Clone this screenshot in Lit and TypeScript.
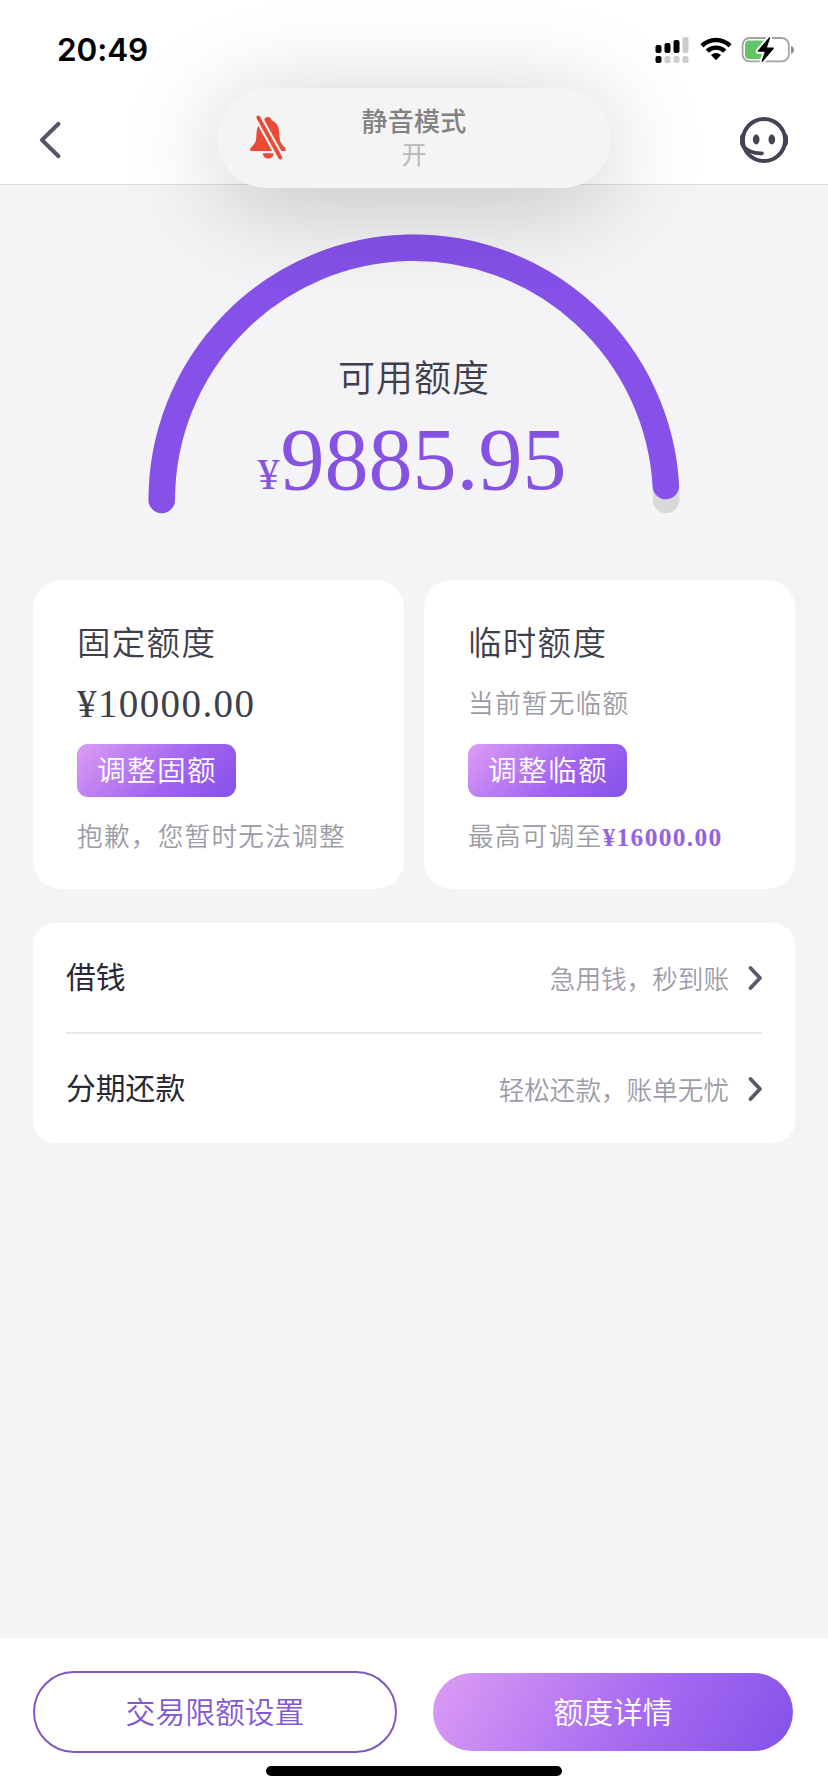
import { LitElement, html, css, svg } from "lit";
import { customElement, property } from "lit/decorators.js";

@customElement("status-bar")
class StatusBar extends LitElement {
  static styles = css`
    :host { display: flex; height: 96px; box-sizing: border-box; padding: 32px 34px 0 57px; justify-content: space-between; }
    .time { font: 600 31.5px/36px Inter, sans-serif; letter-spacing: -0.1px; color: #000; }
    .icons { display: flex; gap: 11px; padding-top: 4px; }
    svg { display: block; }
    .battery { margin-left: -2px; }
  `;
  render() {
    const bars = [8, 10, 13, 16];
    return html`
      <span class="time">20:49</span>
      <div class="icons">
        <svg width="34" height="28" viewBox="0 0 34 28">
          ${bars.map((h, i) => svg`
            <rect x=${0.5 + i * 9} y=${17 - h} width="6" height=${h} rx="2" fill=${i < 3 ? "#000" : "#ccc"}></rect>
            <rect x=${0.5 + i * 9} y="20" width="6" height="7" rx="2" fill=${i < 1 ? "#000" : "#ccc"}></rect>`)}
        </svg>
        <svg width="32" height="28" viewBox="0 0 32 28">
          <path d="M.4 8.2a22.2 22.2 0 0 1 31.2 0l-3.1 3.2a17.8 17.8 0 0 0-25 0z"></path>
          <path d="M5.7 13.6a14.7 14.7 0 0 1 20.6 0l-3.1 3.2a10.3 10.3 0 0 0-14.4 0z"></path>
          <path d="M11 19a7.2 7.2 0 0 1 10 0l-5 5.2z"></path>
        </svg>
        <svg class="battery" width="53" height="28" viewBox="0 0 53 28">
          <rect x="1.6" y="2" width="46.2" height="23.4" rx="7" fill="none" stroke="#a3a3a3" stroke-width="1.8"></rect>
          <path d="M50 10v8c2-.6 3-2.200 3-4s-1-3.400-3-4z" fill="#8f8f8f"></path>
          <rect x="4" y="4.500" width="21" height="18.500" rx="4" fill="#62c466"></rect>
          <path d="M28 1.400 16.800 14.700q-.5 1 .6 1.100h6.300l-3.100 9.300q-.1 1.400 1 .7L32.700 12.800q.6-1-.6-1.200h-6.200l3.200-9.300q.1-1.500-1.100-.9z" fill="#000" stroke="#fff" stroke-width="4" stroke-linejoin="round" paint-order="stroke"></path>
        </svg>
      </div>`;
  }
}

@customElement("nav-bar")
class NavBar extends LitElement {
  static styles = css`
    :host { display: flex; height: 89px; box-sizing: border-box; padding: 18px 38px 0 38px; justify-content: space-between; border-bottom: 1px solid #dcdcde; }
    svg { display: block; }
  `;
  render() {
    return html`
      <svg width="26" height="52" viewBox="0 0 26 52">
        <path d="M20.500 9.800 4 26l16.500 16.200" fill="none" stroke="#55546a" stroke-width="4" stroke-linecap="round" stroke-linejoin="round"></path>
      </svg>
      <svg width="52" height="52" viewBox="0 0 52 52">
        <g fill="none" stroke="#444356">
          <circle cx="26" cy="26" r="21.100" stroke-width="4"></circle>
          <path d="M6 33c4.500 5 11 6.600 18 6.300" stroke-width="3.800" stroke-linecap="round"></path>
        </g>
        <path d="M6.500 18.500C3 19.500 2 21 2 24v4.500C2 32 4 34.500 8 35.500 6 29 6 24 8 18.500zM45.500 18.500c3.500 1 4.500 2.500 4.500 5.500v4.500c0 2.500-1.500 4-4.500 5 1.500-5 1.500-10 0-15z" fill="#444356"></path>
        <ellipse cx="18.200" cy="25.500" rx="3.300" ry="4.900" fill="#444356"></ellipse>
        <ellipse cx="33.800" cy="25.500" rx="3.300" ry="4.900" fill="#444356"></ellipse>
      </svg>`;
  }
}

@customElement("mute-banner")
class MuteBanner extends LitElement {
  static styles = css`
    :host { position: absolute; left: 217px; top: 88px; width: 394px; height: 100px; border-radius: 50px; box-sizing: border-box; background: #f4f4f5; box-shadow: 0 14px 100px rgba(0, 0, 0, 0.22); display: grid; grid-template-columns: 104px 1fr 104px; text-align: center; z-index: 2; }
    .bell { margin: 25px 0 0 31px; display: block; }
    .text { padding-top: 15px; font-family: "Noto Sans CJK SC", sans-serif; }
    .title { font-size: 26px; line-height: 34px; font-weight: 500; color: #828284; letter-spacing: 0.3px; }
    .state { font-size: 25px; line-height: 32px; color: #b9b9bb; }
  `;
  render() {
    return html`
      <svg class="bell" width="40" height="48" viewBox="0 0 40 48">
        <g fill="#e94b39">
          <path d="M2.300 38v-2c0-2 5.600-4 6-11.500C8.600 15 10 9.500 16 7.500c.6-4.600 7.200-4.600 7.800 0 6.200 2 7.500 7.500 7.800 17 .3 7.500 6 9.500 6 11.500v2z"></path>
          <path d="M14.700 40.200h11c-.5 7-10.300 7-11 0z"></path>
        </g>
        <path d="M10.300 4.500 32.300 44.500" stroke="#f4f4f5" stroke-width="8"></path>
        <path d="M10.300 4.500 32.300 44.500" stroke="#e94b39" stroke-width="3.800" stroke-linecap="round"></path>
      </svg>
      <div class="text">
        <div class="title">静音模式</div>
        <div class="state">开</div>
      </div>`;
  }
}

@customElement("quota-gauge")
class QuotaGauge extends LitElement {
  static styles = css`
    :host { display: grid; justify-items: center; height: 395px; }
    .arc { grid-area: 1 / 1; margin-top: 49px; display: block; }
    .text { grid-area: 1 / 1; padding-top: 166px; text-align: center; }
    .label { font: 350 37px/50px "Noto Sans CJK SC", sans-serif; letter-spacing: 1px; color: #3f3e4c; }
    .amount { font: 88px/100px "Liberation Serif", serif; color: #8552e2; margin: 9px 0 0 -4px; white-space: nowrap; }
    .sign { font-size: 44px; margin-right: 1px; }
  `;
  render() {
    return html`
      <svg class="arc" width="532" height="280" viewBox="-266 -266 532 280" fill="none" stroke-width="26.500" stroke-linecap="round">
        <path d="M-252.250 0A252.250 252.250 0 0 1 252.250 0" stroke="#d8d8da"></path>
        <path d="M-252.250 0A252.250 252.250 0 0 1 251.860 -14" stroke="#8551e8"></path>
      </svg>
      <div class="text">
        <div class="label">可用额度</div>
        <div class="amount"><span class="sign">¥</span>9885.95</div>
      </div>`;
  }
}

@customElement("quota-card")
class QuotaCard extends LitElement {
  @property() name = "";
  @property() action = "";
  static styles = css`
    :host { display: flex; flex-direction: column; align-items: flex-start; height: 309px; box-sizing: border-box; padding: 37px 0 0 44px; border-radius: 28px; background: #fff; font-family: "Noto Sans CJK SC", sans-serif; font-weight: 350; letter-spacing: 1.300px; white-space: nowrap; }
    .name { font-size: 33.500px; line-height: 48px; color: #3f3e4c; }
    .value { height: 40px; margin-top: 17px; display: flex; align-items: center; }
    .button { margin-top: 22px; width: 159px; height: 53px; border-radius: 11px; display: flex; align-items: center; justify-content: center; box-sizing: border-box; padding: 0 0 4px 1px; font-size: 28.700px; line-height: 40px; color: #fff; background: linear-gradient(135deg, #dc9cf4, #a264f0 60%, #8351e9); }
    .note { margin-top: 19px; font-size: 25.600px; line-height: 38px; color: #9c9ba5; }
  `;
  render() {
    return html`
      <div class="name">${this.name}</div>
      <div class="value"><slot name="value"></slot></div>
      <div class="button">${this.action}</div>
      <div class="note"><slot name="note"></slot></div>`;
  }
}

@customElement("menu-row")
class MenuRow extends LitElement {
  @property() label = "";
  @property() hint = "";
  static styles = css`
    :host { display: flex; align-items: center; height: 109px; font-family: "Noto Sans CJK SC", sans-serif; }
    .label { flex: 1; font-size: 29.800px; line-height: 44px; font-weight: 400; color: #292834; padding-bottom: 5px; }
    .hint { font-size: 25.600px; line-height: 38px; font-weight: 350; color: #9c9ba7; }
    svg { display: block; margin: 0 -1px 0 18px; }
  `;
  render() {
    return html`
      <span class="label">${this.label}</span>
      <span class="hint">${this.hint}</span>
      <svg width="16" height="28" viewBox="0 0 16 28">
        <path d="M3.500 4 13 14 3.500 24" fill="none" stroke="#5a596b" stroke-width="3.800" stroke-linecap="round" stroke-linejoin="round"></path>
      </svg>`;
  }
}

@customElement("app-root")
class AppRoot extends LitElement {
  static styles = css`
    :host { display: flex; flex-direction: column; position: relative; width: 828px; height: 1792px; overflow: hidden; background: #f4f4f7; }
    .top { background: #fff; }
    .cards { display: grid; grid-template-columns: 1fr 1fr; gap: 20px; padding: 0 33px; }
    .money { font: 39px/40px "Liberation Serif", serif; color: #3f3e4c; letter-spacing: 1.400px; padding-top: 3px; }
    .none { font-size: 25.600px; line-height: 38px; color: #9c9ba5; }
    .max { font: 700 25.500px/30px "Liberation Serif", serif; color: #9462e2; letter-spacing: 1.300px; }
    .list { margin: 34px 33px 0; padding: 0 33px; height: 220px; border-radius: 22px; background: #fff; }
    .rule { height: 2px; background: #e8e8eb; }
    .footer { margin-top: auto; height: 154px; background: #fff; box-sizing: border-box; padding: 33px 35px 0 33px; display: grid; grid-template-columns: 364px 360px; grid-template-rows: 82px auto; justify-content: space-between; align-items: center; font: 350 29.800px/44px "Noto Sans CJK SC", sans-serif; }
    .button { display: flex; align-items: center; justify-content: center; border-radius: 41px; box-sizing: border-box; padding-bottom: 4px; }
    .outline { height: 82px; border: 2px solid #8058c2; color: #8257d6; }
    .filled { height: 78px; color: #fff; background: linear-gradient(120deg, #dc9cf4, #a96cf1 55%, #8351e9); }
    .home { grid-column: 1 / 3; justify-self: center; width: 296px; height: 10px; border-radius: 5px; background: #000; margin: -3px 0 0 2px; }
  `;
  render() {
    return html`
      <div class="top">
        <status-bar></status-bar>
        <nav-bar></nav-bar>
      </div>
      <mute-banner></mute-banner>
      <quota-gauge></quota-gauge>
      <div class="cards">
        <quota-card name="固定额度" action="调整固额">
          <span class="money" slot="value">¥10000.00</span>
          <span slot="note">抱歉，您暂时无法调整</span>
        </quota-card>
        <quota-card name="临时额度" action="调整临额">
          <span class="none" slot="value">当前暂无临额</span>
          <span slot="note">最高可调至<span class="max">¥16000.00</span></span>
        </quota-card>
      </div>
      <div class="list">
        <menu-row label="借钱" hint="急用钱，秒到账"></menu-row>
        <div class="rule"></div>
        <menu-row label="分期还款" hint="轻松还款，账单无忧"></menu-row>
      </div>
      <div class="footer">
        <div class="button outline">交易限额设置</div>
        <div class="button filled">额度详情</div>
        <div class="home"></div>
      </div>`;
  }
}
